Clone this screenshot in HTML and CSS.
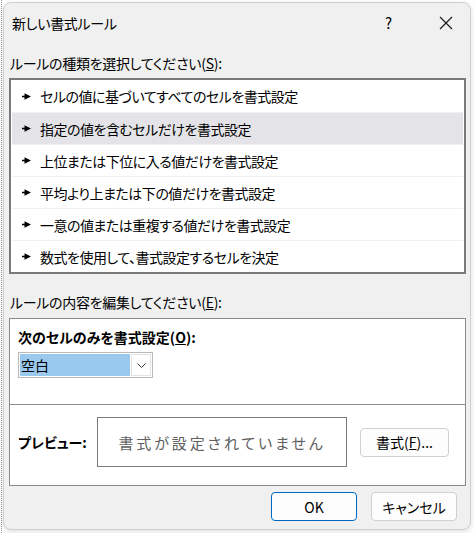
FILE: index.html
```html
<!DOCTYPE html>
<html lang="ja">
<head>
    <meta charset="UTF-8">
    <meta name="viewport" content="width=device-width, initial-scale=1.0">
    <title>新しい書式ルール</title>
    <link rel="stylesheet" href="styles.css">
</head>
<body>
    <div class="sheet">
        <div class="dialog">
            <div class="titlebar">
                <span class="title">新しい書式ルール</span>
                <span class="help">?</span>
                <svg class="close" width="14" height="14" viewBox="0 0 14 14">
                    <path d="M1 1L13 13M13 1L1 13" stroke="#1a1a1a" stroke-width="1.2" fill="none"/>
                </svg>
            </div>

            <div class="content">
                <div class="caption">ルールの種類を選択してください(<u>S</u>):</div>
                <ul class="rule-list">
                    <li><svg class="pointer" width="9" height="7" viewBox="0 0 9 7"><path d="M0 2.7h3v1.6H0zM2.5 0.3l6.5 3.2-6.5 3.2z"/></svg>セルの値に基づいてすべてのセルを書式設定</li>
                    <li class="selected"><svg class="pointer" width="9" height="7" viewBox="0 0 9 7"><path d="M0 2.7h3v1.6H0zM2.5 0.3l6.5 3.2-6.5 3.2z"/></svg>指定の値を含むセルだけを書式設定</li>
                    <li><svg class="pointer" width="9" height="7" viewBox="0 0 9 7"><path d="M0 2.7h3v1.6H0zM2.5 0.3l6.5 3.2-6.5 3.2z"/></svg>上位または下位に入る値だけを書式設定</li>
                    <li><svg class="pointer" width="9" height="7" viewBox="0 0 9 7"><path d="M0 2.7h3v1.6H0zM2.5 0.3l6.5 3.2-6.5 3.2z"/></svg>平均より上または下の値だけを書式設定</li>
                    <li><svg class="pointer" width="9" height="7" viewBox="0 0 9 7"><path d="M0 2.7h3v1.6H0zM2.5 0.3l6.5 3.2-6.5 3.2z"/></svg>一意の値または重複する値だけを書式設定</li>
                    <li><svg class="pointer" width="9" height="7" viewBox="0 0 9 7"><path d="M0 2.7h3v1.6H0zM2.5 0.3l6.5 3.2-6.5 3.2z"/></svg>数式を使用して、書式設定するセルを決定</li>
                </ul>

                <div class="caption second">ルールの内容を編集してください(<u>E</u>):</div>
                <div class="edit-box">
                    <div class="edit-top">
                        <div class="bold-label">次のセルのみを書式設定(<u>O</u>):</div>
                        <div class="combo">
                            <span class="combo-value">空白</span>
                            <span class="combo-arrow">
                                <svg width="9" height="5" viewBox="0 0 9 5"><path d="M0.5 0.5L4.5 4.5L8.5 0.5" stroke="#333" stroke-width="1" fill="none"/></svg>
                            </span>
                        </div>
                    </div>
                    <div class="preview-row">
                        <span class="bold-label">プレビュー:</span>
                        <div class="preview">書式が設定されていません</div>
                        <button class="btn format-btn">書式(<u>F</u>)...</button>
                    </div>
                </div>

                <div class="actions">
                    <button class="btn primary">OK</button>
                    <button class="btn">キャンセル</button>
                </div>
            </div>
        </div>
    </div>
</body>
</html>
```

FILE: styles.css
```css
body {
    margin: 0;
    background-color: #fff;
    font-family: "Noto Sans CJK JP", "Noto Sans", sans-serif;
    font-feature-settings: "palt";
    color: #000;
}
.sheet {
    height: 533px;
    border-left: 1px dotted #9a9a9a; /* シートの枠線 */
    margin-left: 1px;
    padding-top: 2px;
    box-sizing: border-box;
}
.dialog {
    width: 468px;
    height: 528px;
    margin-left: 1px;
    background-color: #f0f0f0;
    border: 1px solid #cfcfcf;
    border-radius: 8px;
    box-sizing: border-box;
    box-shadow: 0 2px 6px rgba(0, 0, 0, 0.12);
}
.titlebar {
    height: 39px;
    display: flex;
    align-items: center;
    padding: 0 0 0 8px;
    font-size: 14px;
}
.title {
    flex: 1;
    letter-spacing: -0.3px;
}
.help {
    font-size: 15px;
    margin-right: 47px;
}
.close {
    margin-right: 17px;
}
.content {
    padding: 0 4px 0 5px;
}
.caption {
    font-size: 14px;
    line-height: 16px;
    padding: 13px 0 7px 1px;
    letter-spacing: -0.3px;
}
.caption.second {
    padding: 20px 0 8px 1px;
}
.rule-list {
    list-style: none;
    margin: 0;
    padding: 0 1px;
    background-color: #fff;
    border: 2px solid #7a7a7a;
    font-size: 14px;
    letter-spacing: -0.5px;
}
.rule-list li {
    height: 32px;
    display: flex;
    align-items: center;
    padding-left: 8px;
    border-top: 1px solid #f0f0f0;
    box-sizing: border-box;
}
.rule-list li:first-child {
    border-top: none;
}
.rule-list li.selected {
    background-color: #e4e4e8; /* 選択中の行 */
}
.pointer {
    margin: 0 9px 0 2px;
    fill: #000;
}
.edit-box {
    background-color: #fff;
    border: 1px solid #8a8a8a;
    height: 168px;
    box-sizing: border-box;
    display: flex;
    flex-direction: column;
}
.edit-top {
    height: 86px;
    padding: 10px 0 0 8px;
    border-bottom: 1px solid #8a8a8a;
    box-sizing: border-box;
}
.bold-label {
    font-size: 14px;
    font-weight: bold;
    line-height: 16px;
}
.combo {
    margin-top: 7px;
    width: 135px;
    height: 26px;
    display: flex;
    border: 1px solid #b9b9b9;
    box-sizing: border-box;
    padding: 1px;
}
.combo-value {
    flex: 1;
    background-color: #99c9ef;
    font-size: 14px;
    line-height: 22px;
    padding-left: 1px;
    margin-right: 1px;
}
.combo-arrow {
    width: 20px;
    display: flex;
    align-items: center;
    justify-content: center;
    border: 1px solid #e3e3e3;
    box-sizing: border-box;
}
.preview-row {
    flex: 1;
    display: flex;
    align-items: center;
    padding: 0 0 6px 8px;
}
.preview-row .bold-label {
    width: 79px;
}
.preview {
    width: 250px;
    height: 50px;
    border: 1px solid #7a7a7a;
    box-sizing: border-box;
    display: flex;
    align-items: center;
    justify-content: center;
    color: #606060;
    font-size: 15px;
    letter-spacing: 2.9px;
}
.btn {
    font-family: inherit;
    font-feature-settings: "palt";
    font-size: 14px;
    color: #000;
    background-color: #fdfdfd;
    border: 1px solid #d0d0d0;
    border-radius: 4px;
    padding: 0;
    height: 29px;
}
.format-btn {
    width: 89px;
    margin-left: 13px;
}
.actions {
    display: flex;
    justify-content: flex-end;
    gap: 14px;
    padding: 6px 9px 0 0;
}
.actions .btn {
    width: 86px;
    height: 29px;
}
.actions .primary {
    border-color: #0067c0; /* 既定のボタン */
}
```
